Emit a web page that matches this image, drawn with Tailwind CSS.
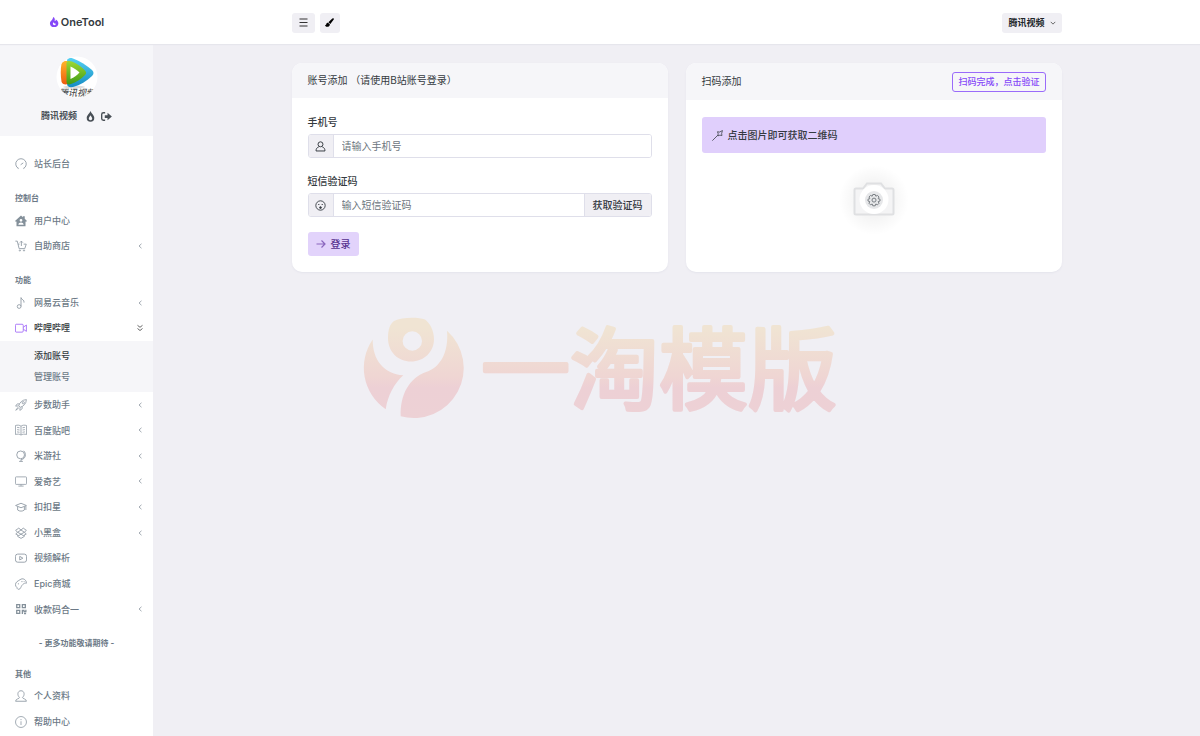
<!DOCTYPE html>
<html lang="zh-CN">
<head>
<meta charset="utf-8">
<meta name="viewport" content="width=device-width, initial-scale=1">
<title>OneTool</title>
<script src="https://cdn.jsdelivr.net/npm/@tailwindcss/browser@4"></script>
</head>
<body class="relative min-h-screen flex flex-col bg-[#f0eff4] text-[10px] text-[#343a40] font-['Inter','Noto_Sans_CJK_SC',sans-serif]">

<svg class="hidden" aria-hidden="true">
  <symbol id="chev" viewBox="0 0 8 8"><path d="M5.500 1.800 3 4 5.500 6.200" fill="none" stroke="#a3abb3"/></symbol>
  <symbol id="flame" viewBox="0 0 16 16"><path fill="currentColor" fill-rule="evenodd" d="M8 0C9 3.500 13.500 6 13.500 10.200A5.500 5.500 0 0 1 2.500 10.200C2.500 6 7 3.500 8 0ZM8 6C7.500 7.800 5.500 8.800 5.500 10.800A2.500 2.500 0 0 0 10.500 10.800C10.500 8.800 8.500 7.800 8 6Z"/></symbol>
</svg>

<header class="flex h-11 shrink-0 bg-white shadow-[0_1px_1px_#e6e6ec] z-10">
  <a href="#" class="w-[153px] shrink-0 flex items-center justify-center gap-[2px] text-[11px] font-semibold text-[#343a40]">
    <svg class="size-[10px]" viewBox="0 0 16 16"><path fill="#8548f8" fill-rule="evenodd" d="M6.500 0C10 1.500 9.500 4.500 9 6.500 10.500 6.500 10.800 5.500 10.800 4 13.500 5.500 15 8 15 10.200 15 13.800 12 16 8.200 16S1.500 13.800 1.500 10.200C1.500 6 6.500 5 6.500 0ZM7.500 8.500C5.500 9.500 5.800 13 8.500 13 10 13 11 12 10.800 10.500 9.500 11 8 10.500 7.500 8.500Z"/></svg>
    OneTool
  </a>
  <div class="flex-1 flex">
    <div class="w-full max-w-[770px] mx-auto flex items-center gap-[5px]">
      <button aria-label="菜单" class="w-[23px] h-5 mt-px rounded-[3px] bg-[#f0eff4] flex items-center justify-center"><svg class="w-[9px] h-[9px]" viewBox="0 0 9 9"><path d="M.5 1H8.500M.5 4.500H8.500M.5 8H8.500" stroke="#333" stroke-width="1.200"/></svg></button>
      <button aria-label="主题" class="w-5 h-5 mt-px rounded-[3px] bg-[#f0eff4] flex items-center justify-center"><svg class="size-[9px]" viewBox="0 0 16 16"><path d="M14.500.3C16 .3 16.200 1.700 15.500 2.800L9.500 10.500 6 7.500 13 1Z M5.300 8.300 8.600 11.200C8.800 14 6.500 15.700 3.800 15.700 1.500 15.700.2 14 0 11.800 1.500 12.800 2 12 2.300 10.500 2.700 9 4 8.200 5.300 8.300Z"/></svg></button>
      <button class="ml-auto h-5 mt-px px-[6px] rounded-[3px] bg-[#f0eff4] flex items-center gap-[5px] text-[9px] font-bold text-[#212529]">腾讯视频
        <svg class="w-[6px] h-[6px]" viewBox="0 0 8 8"><path d="M1 2.500 4 5.500 7 2.500" fill="none" stroke="#666" stroke-width="1.300"/></svg></button>
    </div>
  </div>
</header>

<div class="flex flex-1">
<aside class="w-[153px] shrink-0 bg-white text-[9px] font-medium text-[#6c7986]">
  <div class="flex flex-col items-center bg-[#f6f6f9] pt-3 h-[92px]">
    <svg class="size-[42px]" viewBox="0 0 42 42" role="img" aria-label="头像">
      <defs>
        <clipPath id="av"><circle cx="21" cy="21" r="20.500"/></clipPath>
        <linearGradient id="gb" x2="0" y2="1"><stop stop-color="#55d0f2"/><stop offset="1" stop-color="#168cc4"/></linearGradient>
        <linearGradient id="gg" x2="0" y2="1"><stop stop-color="#a0d934"/><stop offset="1" stop-color="#3f9c16"/></linearGradient>
        <linearGradient id="go" x2="0" y2="1"><stop stop-color="#ffb52a"/><stop offset="1" stop-color="#ee5a10"/></linearGradient>
      </defs>
      <g clip-path="url(#av)">
        <rect width="42" height="42" fill="#fff"/>
        <ellipse cx="18" cy="31" rx="11" ry="1.500" fill="#ddd"/>
        <path fill="url(#gb)" d="M11 5C11 2 14 1.500 17 2.500 24 5 31 9.500 36 14 38 16 38 18 36 20 31 25 24 29 17 31 13 31.500 11 30.500 11 28Z"/>
        <path fill="url(#go)" d="M5.500 7.500C6 5 9 4.500 12 5.500V28C9 29 6 28 5.500 25.500 4.500 19 4.500 13 5.500 7.500Z"/>
        <path fill="url(#gg)" d="M10.500 7C10.500 4.500 13.500 4.500 16 5.500 21 7.500 26 11 29 14.500 30.500 16 30.500 17.500 29 19 25 23 20 26.500 15 28 12 29 10.500 28 10.500 25.500Z"/>
        <path fill="#fff" d="M14.500 10.500C18 12 21 14 23.500 16.500 21 19.500 18 21.500 14.500 23Z"/>
        <text x="3" y="40" font-size="9" font-style="italic" fill="#555">腾讯视频</text>
      </g>
    </svg>
    <div class="flex items-center mt-[10px] leading-4 font-bold text-[#495057]">
      <a href="#">腾讯视频</a>
      <a href="#" aria-label="主题色" class="ml-2"><svg class="size-[11px]"><use href="#flame"/></svg></a>
      <a href="#" aria-label="退出" class="ml-[5px]"><svg class="size-[11px]" viewBox="0 0 16 16"><path d="M6 2.500H3.500Q1 2.500 1 5V11Q1 13.500 3.500 13.500H6" fill="none" stroke="currentColor" stroke-width="2"/><path fill="currentColor" d="M5.500 6H9.500V2.500L15.800 8 9.500 13.500V10H5.500Z"/></svg></a>
    </div>
  </div>

  <nav class="pt-[15px]">
    <a href="#" class="flex items-center h-[26px] pl-[15px]"><svg class="size-3 mr-[7px] text-[#929ca6]" viewBox="0 0 16 16" fill="none" stroke="currentColor" stroke-width="1.200"><path d="M4.500 14A7 7 0 1 1 11.500 14M4.500 14 3.500 12.500M11.500 14 12.500 12.500M7.500 9 11 6.500"/></svg>站长后台</a>

    <h2 class="pt-[14px] pb-[3px] px-[15px] text-[8px] leading-[14px] font-bold">控制台</h2>
    <ul>
      <li><a href="#" class="flex items-center h-[25px] pl-[15px]"><svg class="size-3 mr-[7px] text-[#84909a]" viewBox="0 0 16 16"><path fill="currentColor" fill-rule="evenodd" d="M8 .8 10.500 3V1.500H13V5L16 8 14.800 9 14 8.500V15H2V8.500L1.200 9 0 8ZM8 5.300A1.800 1.800 0 1 0 8 9 1.800 1.800 0 1 0 8 5.300ZM4.500 13H11.500C11.500 9 4.500 9 4.500 13Z"/></svg>用户中心</a></li>
      <li><a href="#" class="flex items-center h-[26px] pl-[15px]"><svg class="size-3 mr-[7px] text-[#929ca6]" viewBox="0 0 16 16" fill="none" stroke="currentColor" stroke-width="1.200"><path d="M.5 1.500H3L5.500 11.500H13L15 5.500H11.500M4 5.500H6M8.500 1.500V8M6.500 3.500 8.500 1.500 10.500 3.500"/><circle cx="6.500" cy="14" r=".8"/><circle cx="12" cy="14" r=".8"/></svg>自助商店<svg class="size-2 ml-auto mr-[9px]"><use href="#chev"/></svg></a></li>
    </ul>

    <h2 class="pt-[14px] pb-[3px] px-[15px] text-[8px] leading-[14px] font-bold">功能</h2>
    <ul>
      <li><a href="#" class="flex items-center h-[25px] pl-[15px]"><svg class="size-3 mr-[7px] text-[#929ca6]" viewBox="0 0 16 16" fill="none" stroke="currentColor" stroke-width="1.200"><circle cx="5.500" cy="12.700" r="2.500"/><path d="M8 12.500V.8C8.500 4 13 3.500 12 7.500"/></svg>网易云音乐<svg class="size-2 ml-auto mr-[9px]"><use href="#chev"/></svg></a></li>
      <li>
        <a href="#" aria-expanded="true" class="flex items-center h-[26px] pl-[15px] text-[#343a40]"><svg class="size-3 mr-[7px] text-[#a56ff8]" viewBox="0 0 16 16" fill="none" stroke="currentColor" stroke-width="1.200"><path d="M1.500 3H9.500Q11 3 11 4.500V12Q11 13.500 9.500 13.500H1.500Q.6 13.500 .6 12V4.500Q.6 3 1.500 3ZM11 7 15.200 4V12.500L11 9.500"/></svg>哔哩哔哩<svg class="size-2 ml-auto mr-[9px]" viewBox="0 0 8 8" fill="none" stroke="#666"><path d="M1.500 1.300 4 3.300 6.500 1.300M1.500 4.500 4 6.500 6.500 4.500"/></svg></a>
        <ul class="bg-[#f6f6f9] py-1 pl-[34px]">
          <li><a href="#" class="block leading-[21px] text-[#343a40]">添加账号</a></li>
          <li><a href="#" class="block leading-[22px]">管理账号</a></li>
        </ul>
      </li>
    </ul>
    <ul class="flex flex-col min-h-[230px]">
      <li class="flex-1 flex"><a href="#" class="flex-1 flex items-center pl-[15px]"><svg class="size-3 mr-[7px] text-[#929ca6]" viewBox="0 0 16 16" fill="none" stroke="currentColor" stroke-width="1.100"><path d="M5 9C6 5 9.500 1 15.200.8 15 6.500 11 10 7 11ZM6 6.500H3L.8 9.500 4.800 9.300M9.500 10V13L6.500 15.200 6.700 11.200M4 11 1 15 5 12"/><circle cx="11" cy="5" r="1.500"/></svg>步数助手<svg class="size-2 ml-auto mr-[9px]"><use href="#chev"/></svg></a></li>
      <li class="flex-1 flex"><a href="#" class="flex-1 flex items-center pl-[15px]"><svg class="size-3 mr-[7px] text-[#929ca6]" viewBox="0 0 16 16" fill="none" stroke="currentColor" stroke-width="1.100"><path d="M8 3C6.500 1.300 3 1.300.6 2V14C3 13.300 6.500 13.300 8 14.800 9.500 13.300 13 13.300 15.400 14V2C13 1.300 9.500 1.300 8 3ZM8 3V14.500M2.800 4.500 6 5M2.800 7.500 6 8M2.800 10.500 6 11M13.200 4.500 10 5M13.200 7.500 10 8M13.200 10.500 10 11"/></svg>百度贴吧<svg class="size-2 ml-auto mr-[9px]"><use href="#chev"/></svg></a></li>
      <li class="flex-1 flex"><a href="#" class="flex-1 flex items-center pl-[15px]"><svg class="size-3 mr-[7px] text-[#929ca6]" viewBox="0 0 16 16" fill="none" stroke="currentColor" stroke-width="1.200"><circle cx="7.500" cy="6.500" r="5.200"/><path d="M11.500 1C15.500 4.500 14.500 12 8 13M8 13V15M5.500 15.200H10.500"/></svg>米游社<svg class="size-2 ml-auto mr-[9px]"><use href="#chev"/></svg></a></li>
      <li class="flex-1 flex"><a href="#" class="flex-1 flex items-center pl-[15px]"><svg class="size-3 mr-[7px] text-[#929ca6]" viewBox="0 0 16 16" fill="none" stroke="currentColor" stroke-width="1.100"><rect x=".6" y="2.500" width="14.800" height="10" rx="1"/><path d="M8 12.500V14.500M4.500 14.800H11.500"/></svg>爱奇艺<svg class="size-2 ml-auto mr-[9px]"><use href="#chev"/></svg></a></li>
      <li class="flex-1 flex"><a href="#" class="flex-1 flex items-center pl-[15px]"><svg class="size-3 mr-[7px] text-[#929ca6]" viewBox="0 0 16 16" fill="none" stroke="currentColor" stroke-width="1.200"><path d="M.8 6 8 3 15.200 6 8 9ZM3.500 7.500V12C6 14 10 14 12.500 12V7.500M14.500 6.500V12"/></svg>扣扣星<svg class="size-2 ml-auto mr-[9px]"><use href="#chev"/></svg></a></li>
      <li class="flex-1 flex"><a href="#" class="flex-1 flex items-center pl-[15px]"><svg class="size-3 mr-[7px] text-[#929ca6]" viewBox="0 0 16 16" fill="none" stroke="currentColor" stroke-width="1.200"><path d="M5 1.500 8 4 3.500 7 .8 4.500ZM11 1.500 8 4 12.500 7 15.200 4.500ZM3.500 7 1 9.300 5 11.500 8 9.500 3.500 7M12.500 7 15 9.300 11 11.500 8 9.500 12.500 7M3.500 11V12.500L8 15.200 12.500 12.500V11"/></svg>小黑盒<svg class="size-2 ml-auto mr-[9px]"><use href="#chev"/></svg></a></li>
      <li class="flex-1 flex"><a href="#" class="flex-1 flex items-center pl-[15px]"><svg class="size-3 mr-[7px] text-[#929ca6]" viewBox="0 0 16 16" fill="none" stroke="currentColor" stroke-width="1.200"><rect x=".6" y="2.800" width="14.800" height="10.800" rx="3"/><path d="M6.300 5.800V10.600L10.500 8.200Z"/></svg>视频解析</a></li>
      <li class="flex-1 flex"><a href="#" class="flex-1 flex items-center pl-[15px]"><svg class="size-3 mr-[7px] text-[#929ca6]" viewBox="0 0 16 16" fill="none" stroke="currentColor" stroke-width="1.200"><path d="M8 1.500C11.500 0 15.500 3 15.200 7 13.500 6.500 12 7 10.500 8.500 8.500 10 8.500 12 6.500 14.500 4.500 16 2.500 14.500 2.500 12.500 0 11 0 7 2.500 5 4 4 6 2.500 8 1.500Z"/><path d="M4.500 7V8.500M8.500 4.800H10M11.500 4 12.500 5"/></svg>Epic商城</a></li>
      <li class="flex-1 flex"><a href="#" class="flex-1 flex items-center pl-[15px]"><svg class="size-3 mr-[7px] text-[#84909a]" viewBox="0 0 16 16" fill="none" stroke="currentColor" stroke-width="1.700"><path d="M2.300 2.300H6.300V6.300H2.300ZM9.800 2.300H13.800V6.300H9.800ZM2.300 9.800H6.300V13.800H2.300ZM9.800 14.500V9.800H12V11.500H14.500V9M12 14H14.800"/></svg>收款码合一<svg class="size-2 ml-auto mr-[9px]"><use href="#chev"/></svg></a></li>
    </ul>

    <p class="pt-[14px] pb-[3px] text-center text-[8px] leading-[14px] font-bold">- 更多功能敬请期待 -</p>

    <h2 class="pt-[14px] pb-[2px] px-[15px] text-[8px] leading-[14px] font-bold">其他</h2>
    <ul>
      <li><a href="#" class="flex items-center h-[26px] pl-[15px]"><svg class="size-3 mr-[7px] text-[#929ca6]" viewBox="0 0 16 16" fill="none" stroke="currentColor" stroke-width="1.200"><path d="M6 9.800C2.800 7.500 3 1 8 1S13.200 7.500 10 9.800C10 12 15.200 11.500 15.200 15H.8C.8 11.500 6 12 6 9.800Z"/></svg>个人资料</a></li>
      <li><a href="#" class="flex items-center h-[25px] pl-[15px]"><svg class="size-3 mr-[7px] text-[#929ca6]" viewBox="0 0 16 16" fill="none" stroke="currentColor" stroke-width="1.100"><circle cx="8" cy="8" r="7.300"/><path d="M8 7V12M8 4V5.500"/></svg>帮助中心</a></li>
    </ul>
  </nav>
</aside>

<main class="flex-1 pt-[19px]">
  <div class="max-w-[770px] mx-auto grid grid-cols-2 gap-[18px]">
    <section class="rounded-[10px] bg-white overflow-hidden shadow-[0_1px_2px_#e4e4ec]">
      <h3 class="h-[35px] px-4 flex items-center bg-[#f6f6f9]">账号添加 （请使用B站账号登录）</h3>
      <form class="p-4">
        <label for="phone" class="block leading-4 font-medium">手机号</label>
        <div class="mt-1 flex h-6 rounded-[3px] border border-[#dfdfea] overflow-hidden">
          <span class="w-[25px] shrink-0 flex items-center justify-center bg-[#f0eff4] border-r border-[#dfdfea]"><svg class="size-[11px]" viewBox="0 0 16 16" fill="none" stroke="currentColor" stroke-width="1.400"><circle cx="8" cy="4.800" r="3.600"/><path d="M5.500 8.500C3 9.500 1.500 11 1.500 14.500H14.500C14.500 11 13 9.500 10.500 8.500"/></svg></span>
          <input id="phone" type="tel" placeholder="请输入手机号" class="flex-1 min-w-0 px-2 bg-white outline-none placeholder:text-[#6c757d]">
        </div>
        <label for="code" class="mt-[15px] block leading-4 font-medium">短信验证码</label>
        <div class="mt-1 flex h-6 rounded-[3px] border border-[#dfdfea] overflow-hidden">
          <span class="w-[25px] shrink-0 flex items-center justify-center bg-[#f0eff4] border-r border-[#dfdfea]"><svg class="size-[11px]" viewBox="0 0 16 16" fill="none" stroke="currentColor" stroke-width="1.300"><circle cx="8" cy="8" r="6.800"/><circle cx="8" cy="11" r="1.300" fill="currentColor"/><path d="M4.700 6.500H6.300M9.700 6.500H11.300" stroke-width="1.600"/></svg></span>
          <input id="code" type="text" placeholder="输入短信验证码" class="flex-1 min-w-0 px-2 bg-white outline-none placeholder:text-[#6c757d]">
          <button type="button" class="px-2 bg-[#f0eff4] border-l border-[#dfdfea] font-medium">获取验证码</button>
        </div>
        <button type="submit" class="mt-[15px] h-6 px-2 rounded-[3px] bg-[#e2d3fb] flex items-center gap-[5px] font-medium text-[#55308f]"><svg class="size-[10px]" viewBox="0 0 10 10" fill="none" stroke="#8a66bd" stroke-width="1.200"><path d="M.5 5H9M5.500 1.500 9 5 5.500 8.500"/></svg>登录</button>
      </form>
    </section>

    <section class="rounded-[10px] bg-white overflow-hidden shadow-[0_1px_2px_#e4e4ec]">
      <div class="h-[37px] px-4 flex items-center justify-between bg-[#f6f6f9]">
        <h3>扫码添加</h3>
        <button class="h-5 px-[5px] rounded-[3px] border border-[#9a6bfa] text-[9px] font-medium text-[#8548f8]">扫码完成，点击验证</button>
      </div>
      <div class="p-4 pt-[17px]">
        <p class="h-9 px-[10px] rounded-[3px] bg-[#e0cffc] flex items-center gap-[5px] font-medium"><svg class="size-[11px]" viewBox="0 0 16 16" fill="none" stroke="currentColor" stroke-width="1.100"><path d="M.5 15.500 8.500 7.500M8 2.500 11 3 15.200 .8 14 5.200 14.500 8 11.500 7.500 8.500 8.500 9 5.500Z"/></svg>点击图片即可获取二维码</p>
        <div class="mt-[11px] flex justify-center">
          <button aria-label="获取二维码"><svg class="size-[72px]" viewBox="0 0 72 72">
            <defs><radialGradient id="glow"><stop offset=".3" stop-color="#000" stop-opacity=".06"/><stop offset=".7" stop-color="#000" stop-opacity=".025"/><stop offset="1" stop-color="#000" stop-opacity="0"/></radialGradient></defs>
            <circle cx="36" cy="36" r="35" fill="url(#glow)"/>
            <path d="M18 24.500H25L29 19.500H43L47 24.500H54Q55.500 24.500 55.500 26V49Q55.500 50.500 54 50.500H18Q16.500 50.500 16.500 49V26Q16.500 24.500 18 24.500Z" fill="#f4f4f5" stroke="#dfe0e2" stroke-width="2"/>
            <circle cx="36" cy="35.500" r="14.500" fill="#fff"/>
            <circle cx="36" cy="36" r="9" fill="#e6e7e9"/>
            <g fill="none" stroke="#7a7f84"><path d="M34.800 30.500H37.200L37.800 32.200 39.500 31.400 41 33 40.200 34.700 42 35.200V37L40.200 37.600 41 39.300 39.500 40.800 37.800 40 37.200 41.800H34.800L34.200 40 32.500 40.800 31 39.300 31.800 37.600 30 37V35.200L31.800 34.700 31 33 32.500 31.400 34.200 32.200Z"/><circle cx="36" cy="36.100" r="2"/></g>
          </svg></button>
        </div>
      </div>
    </section>
  </div>
</main>
</div>

<!-- Centred watermark over the page -->
<div class="absolute inset-0 flex items-center justify-center pointer-events-none">
  <svg class="w-[474px] h-[100px] overflow-visible" viewBox="0 0 474 100">
    <defs><linearGradient id="wm" gradientUnits="userSpaceOnUse" x1="0" y1="0" x2="0" y2="100"><stop offset=".1" stop-color="#f0e4d3"/><stop offset=".6" stop-color="#efd5d3"/><stop offset=".7" stop-color="#edd0d5"/><stop offset="1" stop-color="#edd1d5"/></linearGradient></defs>
    <g fill="url(#wm)" transform="translate(1 0)">
      <path fill-rule="evenodd" d="M30 3C38-1 54-1 61 1.500C66 5 70 13 70 21C70 34 60 43.500 47 43.500S24 34 24 20C24 11 26 6 30 3ZM48.300 13.300A9.700 9.700 0 1 0 48.300 32.700 9.700 9.700 0 1 0 48.300 13.300Z"/>
      <path d="M8.700 21.500C8.500 42 20 56 39.300 57.300C30 66 24 77 21.700 91.300A50 50 0 0 1 8.700 21.500Z"/>
      <path d="M83 12.700A50 50 0 0 1 36.700 98.300C36 77 45 60 62 54C75 50 85 36 83 12.700Z"/>
    </g>
    <text x="118" y="84" font-size="89" font-weight="400" fill="url(#wm)" stroke="url(#wm)" stroke-width="4" stroke-linejoin="round" stroke-linecap="round" font-family="'Noto Sans CJK SC', sans-serif">一淘模版</text>
  </svg>
</div>
</body>
</html>
